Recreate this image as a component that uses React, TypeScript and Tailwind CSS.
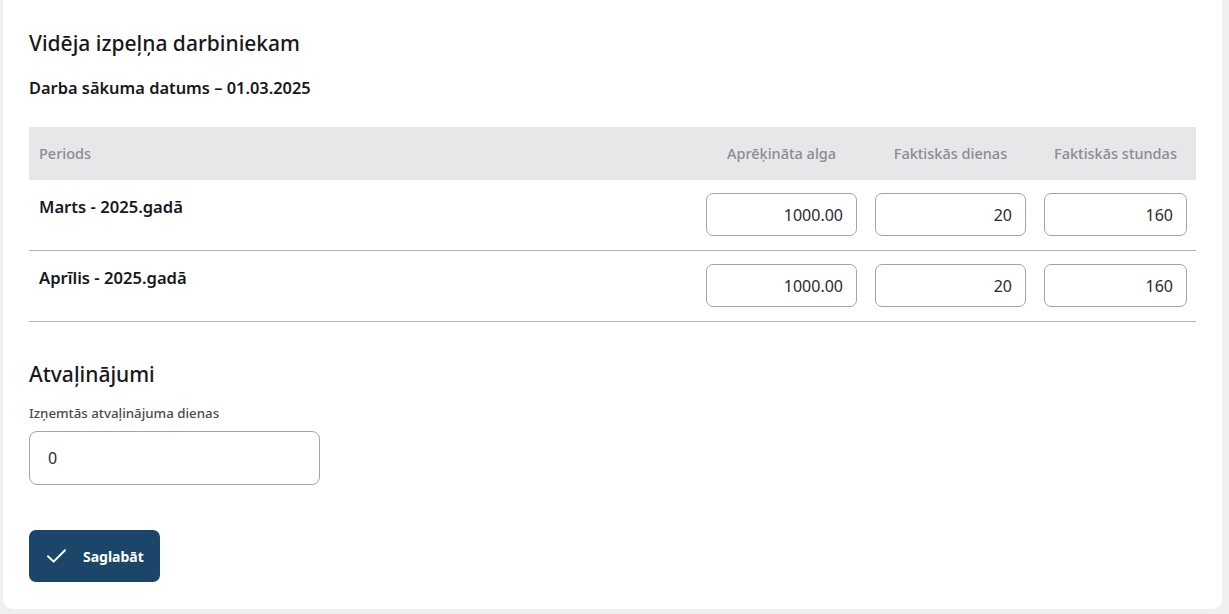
const rows = [
  { id: "03", label: "Marts - 2025.gadā", salary: "1000.00", days: "20", hours: "160" },
  { id: "04", label: "Aprīlis - 2025.gadā", salary: "1000.00", days: "20", hours: "160" },
];

function NumberInput({ value, className }: { value: string; className: string }) {
  return (
    <input
      defaultValue={value}
      className={`h-[43px] rounded-[7px] border border-[#a3a3ab] bg-white pr-[13px] text-right text-[16px] text-[#2b2b30] outline-none ${className}`}
    />
  );
}

export default function App() {
  return (
    <div
      className="min-h-screen bg-[#f0f0f0] pb-[5px] pl-[3px] pr-[7px]"
      style={{ fontFamily: '"Noto Sans", "Open Sans", sans-serif' }}
    >
      <div className="rounded-b-[10px] bg-white px-[26px] pb-[27px] pt-[29px]">
        <h1 className="text-[21px] font-medium leading-[28px] text-[#18181c]">Vidēja izpeļņa darbiniekam</h1>
        <p className="mt-[19px] text-[16.4px] font-semibold leading-[24px] text-[#18181c]">
          Darba sākuma datums – 01.03.2025
        </p>

        <table className="mt-[27px] w-full border-collapse">
          <thead>
            <tr className="h-[53px] bg-[#e7e7e9] text-[14.5px] font-medium text-[#8b8b92]">
              <th className="pl-[10px] text-left font-medium">Periods</th>
              <th className="w-[169px] px-[9px] text-center font-medium">Aprēķināta alga</th>
              <th className="w-[169px] px-[9px] text-center font-medium">Faktiskās dienas</th>
              <th className="w-[161px] px-[9px] text-center font-medium">Faktiskās stundas</th>
            </tr>
          </thead>
          <tbody>
            {rows.map((row) => (
              <tr key={row.id} className="border-b border-[#b4b4b8]">
                <td className="pl-[10px] pt-[15px] align-top text-[16.6px] font-semibold leading-[24px] text-[#18181c]">
                  {row.label}
                </td>
                <td className="px-[9px] pb-[14px] pt-[13px]">
                  <NumberInput value={row.salary} className="w-[151px]" />
                </td>
                <td className="px-[9px] pb-[14px] pt-[13px]">
                  <NumberInput value={row.days} className="w-[151px]" />
                </td>
                <td className="px-[9px] pb-[14px] pt-[13px]">
                  <NumberInput value={row.hours} className="w-[143px]" />
                </td>
              </tr>
            ))}
          </tbody>
        </table>

        <h2 className="mt-[38px] text-[21px] font-medium leading-[28px] text-[#18181c]">Atvaļinājumi</h2>
        <label className="mt-[16px] block text-[13.3px] font-medium leading-[18px] text-[#4b4b55]">
          Izņemtās atvaļinājuma dienas
        </label>
        <input
          defaultValue="0"
          className="mt-[9px] block h-[54px] w-[291px] rounded-[8px] border border-[#a3a3ab] pl-[18px] text-[16px] text-[#2b2b30] outline-none"
        />

        <button className="mt-[45px] flex h-[52px] w-[131px] items-center gap-[17px] rounded-[7px] bg-[#1c4669] pl-[18px] text-[14px] font-bold text-white">
          <svg width="19" height="14" viewBox="0 0 19 14" fill="none">
            <path d="M1 7.2 6.6 12.6 18 1.2" stroke="white" strokeWidth="2" strokeLinecap="round" strokeLinejoin="round" />
          </svg>
          Saglabāt
        </button>
      </div>
    </div>
  );
}
